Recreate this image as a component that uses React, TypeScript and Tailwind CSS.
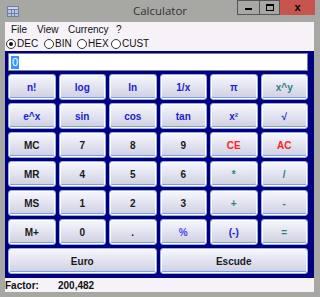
import React from 'react';

type Key = { label: string; color: string; span?: boolean };

const BLUE = 'text-[#1c1cd0]';
const TEAL = 'text-[#2f7f7f]';
const DARK = 'text-[#1a1a1a]';
const RED = 'text-[#ff2222]';
const LIGHTBLUE = 'text-[#4848f0]';

const KEYS: Key[] = [
  { label: 'n!', color: BLUE }, { label: 'log', color: BLUE }, { label: 'ln', color: BLUE },
  { label: '1/x', color: BLUE }, { label: 'π', color: BLUE }, { label: 'x^y', color: TEAL },
  { label: 'e^x', color: BLUE }, { label: 'sin', color: BLUE }, { label: 'cos', color: BLUE },
  { label: 'tan', color: BLUE }, { label: 'x²', color: BLUE }, { label: '√', color: BLUE },
  { label: 'MC', color: DARK }, { label: '7', color: DARK }, { label: '8', color: DARK },
  { label: '9', color: DARK }, { label: 'CE', color: RED }, { label: 'AC', color: RED },
  { label: 'MR', color: DARK }, { label: '4', color: DARK }, { label: '5', color: DARK },
  { label: '6', color: DARK }, { label: '*', color: TEAL }, { label: '/', color: TEAL },
  { label: 'MS', color: DARK }, { label: '1', color: DARK }, { label: '2', color: DARK },
  { label: '3', color: DARK }, { label: '+', color: TEAL }, { label: '-', color: TEAL },
  { label: 'M+', color: DARK }, { label: '0', color: DARK }, { label: '.', color: DARK },
  { label: '%', color: LIGHTBLUE }, { label: '(-)', color: BLUE }, { label: '=', color: TEAL },
  { label: 'Euro', color: DARK, span: true }, { label: 'Escude', color: DARK, span: true },
];

function Radio({ checked, label, w }: { checked?: boolean; label: string; w: string }) {
  return (
    <div className={`${w} flex items-center gap-[1px]`}>
      <span className="w-[10px] h-[10px] rounded-full border border-[#333] bg-white flex items-center justify-center shrink-0">
        {checked && <span className="w-[4px] h-[4px] rounded-full bg-[#111]" />}
      </span>
      <span>{label}</span>
    </div>
  );
}

export default function App() {
  return (
    <div className="w-[320px] h-[297px] bg-[#a7a7a3] flex flex-col overflow-hidden" style={{ fontFamily: '"Liberation Sans", Arial, sans-serif' }}>
      {/* title bar */}
      <div className="h-[22px] flex items-start relative">
        <div className="absolute left-[7px] top-[6px] w-[12px] h-[11px] bg-[#6f7fa8] grid grid-cols-3 gap-[1px] p-[1px]">
          <span className="col-span-3 bg-[#c9d3ea]" />
          <span className="bg-[#b6c3e3]" /><span className="bg-[#b6c3e3]" /><span className="bg-[#b6c3e3]" />
          <span className="bg-[#b6c3e3]" /><span className="bg-[#b6c3e3]" /><span className="bg-[#b6c3e3]" />
        </div>
        <div className="flex-1 text-center text-[11.5px] text-[#333] leading-[22px]" style={{ fontFamily: '"Open Sans", sans-serif' }}>Calculator</div>
        <div className="absolute right-[5px] top-0 flex h-[15px]">
          <div className="w-[22px] border border-[#555] border-r-0 flex items-center justify-center">
            <span className="w-[7px] h-[2px] bg-black mt-[3px]" />
          </div>
          <div className="w-[21px] border border-[#555] flex items-center justify-center">
            <span className="w-[8px] h-[7px] border border-black border-t-2" />
          </div>
          <div className="w-[35px] bg-[#c8554d] flex items-center justify-center text-[11px] font-bold text-black">x</div>
        </div>
      </div>

      {/* client area */}
      <div className="mx-[5px] mr-[6px] h-[270px] bg-[#f6f2f8] flex flex-col">
        <div className="h-[15px] flex items-center pl-[6px] text-[10px] text-[#111]">
          <span className="w-[26px]">File</span>
          <span className="w-[31px]">View</span>
          <span className="w-[48px]">Currency</span>
          <span>?</span>
        </div>
        <div className="h-[13px] flex items-center pl-[1px] text-[10px] text-[#111]">
          <Radio checked label="DEC" w="w-[38px]" />
          <Radio label="BIN" w="w-[33px]" />
          <Radio label="HEX" w="w-[34px]" />
          <Radio label="CUST" w="w-[40px]" />
        </div>

        <div className="mt-[1px] bg-[#000080] pl-[3px] pr-[6px] pt-[2px] pb-[4px]">
          <div className="h-[18px] bg-white border border-[#7a7a9a] flex items-center pl-[2px]">
            <span className="bg-[#3399ff] text-white text-[11px] leading-[13px] px-[1px]">0</span>
          </div>
          <div className="mt-[3px] grid grid-cols-6 gap-[3px] auto-rows-[26px]">
            {KEYS.map((k) => (
              <button
                key={k.label}
                className={`${k.span ? 'col-span-3' : ''} ${k.color} rounded-[3px] border border-[#9aaede] bg-gradient-to-b from-[#f7f7fc] to-[#cdcfe2] shadow-[inset_0_0_0_1px_#ffffff,inset_0_-1px_0_1px_#7e9ee0] text-[10px] font-bold flex items-center justify-center`}
              >
                {k.label}
              </button>
            ))}
          </div>
        </div>

        <div className="h-[15px] flex items-center text-[10px] text-[#111] font-bold">
          <span className="w-[53px]">Factor:</span>
          <span>200,482</span>
        </div>
      </div>
    </div>
  );
}
